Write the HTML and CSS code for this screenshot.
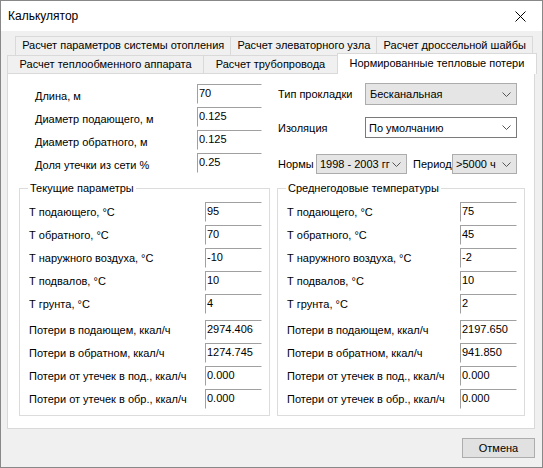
FILE: index.html
```html
<!DOCTYPE html>
<html lang="ru">
<head>
  <meta charset="UTF-8" />
  <title>Калькулятор</title>
  <link rel="stylesheet" href="styles.css">
</head>
<body>

  <div class="window">
    <div class="titlebar">
      <span class="title">Калькулятор</span>
      <svg class="close" width="11" height="11" viewBox="0 0 11 11">
        <path d="M0.5 0.5 L10.5 10.5 M10.5 0.5 L0.5 10.5" stroke="#000" stroke-width="1" fill="none"/>
      </svg>
    </div>

    <div class="client">
      <!-- Tabs -->
      <div class="tabs">
        <div class="tab-row back">
          <div class="tab">Расчет параметров системы отопления</div>
          <div class="tab">Расчет элеваторного узла</div>
          <div class="tab">Расчет дроссельной шайбы</div>
        </div>
        <div class="tab-row front">
          <div class="tab">Расчет теплообменного аппарата</div>
          <div class="tab">Расчет трубопровода</div>
          <div class="tab selected">Нормированные тепловые потери</div>
        </div>
      </div>

      <div class="panel">
        <div class="top">
          <div class="params">
            <label>Длина, м</label>
            <input class="field" type="text" value="70"/>
            <label>Диаметр подающего, м</label>
            <input class="field" type="text" value="0.125"/>
            <label>Диаметр обратного, м</label>
            <input class="field" type="text" value="0.125"/>
            <label>Доля утечки из сети %</label>
            <input class="field" type="text" value="0.25"/>
          </div>

          <div class="options">
            <div class="opt-row first">
              <span class="opt-label">Тип прокладки</span>
              <div class="combo flat wide">
                <span>Бесканальная</span>
                <svg class="chev" width="9" height="5" viewBox="0 0 9 5"><path d="M0.5 0.5 L4.5 4.5 L8.5 0.5" stroke="#555" fill="none"/></svg>
              </div>
            </div>
            <div class="opt-row second">
              <span class="opt-label">Изоляция</span>
              <div class="combo edit wide">
                <span>По умолчанию</span>
                <svg class="chev" width="9" height="5" viewBox="0 0 9 5"><path d="M0.5 0.5 L4.5 4.5 L8.5 0.5" stroke="#555" fill="none"/></svg>
              </div>
            </div>
            <div class="opt-row third">
              <span class="opt-label short">Нормы</span>
              <div class="combo flat norms">
                <span>1998 - 2003 гг</span>
                <svg class="chev" width="9" height="5" viewBox="0 0 9 5"><path d="M0.5 0.5 L4.5 4.5 L8.5 0.5" stroke="#555" fill="none"/></svg>
              </div>
              <span class="opt-label period">Период</span>
              <div class="combo flat hours">
                <span>&gt;5000 ч</span>
                <svg class="chev" width="9" height="5" viewBox="0 0 9 5"><path d="M0.5 0.5 L4.5 4.5 L8.5 0.5" stroke="#555" fill="none"/></svg>
              </div>
            </div>
          </div>
        </div>

        <div class="groups">
          <fieldset class="group left">
            <legend>Текущие параметры</legend>
            <div class="rows">
              <label>Т подающего, °C</label><input class="field" type="text" value="95"/>
              <label>Т обратного, °C</label><input class="field" type="text" value="70"/>
              <label>Т наружного воздуха, °C</label><input class="field" type="text" value="-10"/>
              <label>Т подвалов, °C</label><input class="field" type="text" value="10"/>
              <label>Т грунта, °C</label><input class="field" type="text" value="4"/>
            </div>
            <div class="rows losses">
              <label>Потери в подающем, ккал/ч</label><input class="field" type="text" value="2974.406"/>
              <label>Потери в обратном, ккал/ч</label><input class="field" type="text" value="1274.745"/>
              <label>Потери от утечек в под., ккал/ч</label><input class="field" type="text" value="0.000"/>
              <label>Потери от утечек в обр., ккал/ч</label><input class="field" type="text" value="0.000"/>
            </div>
          </fieldset>

          <fieldset class="group right">
            <legend>Среднегодовые температуры</legend>
            <div class="rows">
              <label>Т подающего, °C</label><input class="field" type="text" value="75"/>
              <label>Т обратного, °C</label><input class="field" type="text" value="45"/>
              <label>Т наружного воздуха, °C</label><input class="field" type="text" value="-2"/>
              <label>Т подвалов, °C</label><input class="field" type="text" value="10"/>
              <label>Т грунта, °C</label><input class="field" type="text" value="2"/>
            </div>
            <div class="rows losses">
              <label>Потери в подающем, ккал/ч</label><input class="field" type="text" value="2197.650"/>
              <label>Потери в обратном, ккал/ч</label><input class="field" type="text" value="941.850"/>
              <label>Потери от утечек в под., ккал/ч</label><input class="field" type="text" value="0.000"/>
              <label>Потери от утечек в обр., ккал/ч</label><input class="field" type="text" value="0.000"/>
            </div>
          </fieldset>
        </div>
      </div>

      <div class="footer">
        <button type="button" class="btn">Отмена</button>
      </div>
    </div>
  </div>

</body>
</html>
```

FILE: styles.css
```css
* {
  margin: 0;
  padding: 0;
  box-sizing: border-box;
}

body {
  background: #fff;
  color: #000;
  font-family: "Liberation Sans", Arial, sans-serif;
  font-size: 11px;
}

.window {
  width: 543px;
  height: 468px;
  border: 1px solid #888;
  background: #f0f0f0;
  display: flex;
  flex-direction: column;
}

.titlebar {
  height: 30px;
  background: #fff;
  display: flex;
  align-items: center;
  justify-content: space-between;
  padding: 0 16px 0 7px;
  font-size: 12px;
}

.client {
  flex: 1;
  display: flex;
  flex-direction: column;
  padding: 5px 0 0 6px;
}

/* tabs */
.tab-row {
  display: flex;
  height: 19px;
}

.tab-row.back {
  margin-left: 8px;
  width: 518px;
}

.tab-row.front {
  height: 18px;
  width: 528px;
}

.tab {
  flex: 1 1 auto;
  border: 1px solid #d9d9d9;
  border-bottom: none;
  margin-left: -1px;
  background: #f0f0f0;
  font-size: 11px;
  line-height: 17px;
  text-align: center;
  white-space: nowrap;
}

.tab:first-child {
  margin-left: 0;
}

.tab.selected {
  align-self: flex-start;
  height: 21px;
  margin-top: -2px;
  margin-right: -2px;
  line-height: 19px;
  background: #fff;
  position: relative;
  z-index: 1;
}

/* page */
.panel {
  width: 528px;
  height: 356px;
  border: 1px solid #d9d9d9;
  background: #fff;
}

.top {
  display: flex;
  padding: 10px 0 0 27px;
}

.params {
  display: grid;
  grid-template-columns: 162px 65px;
  grid-auto-rows: 20px;
  row-gap: 3px;
}

.params label {
  padding-top: 5px;
  line-height: 14px;
}

.field {
  width: 100%;
  height: 20px;
  border: 1px solid;
  border-color: #a0a0a0 #fff #fff #a0a0a0;
  background: #fff;
  color: #000;
  font: inherit;
  padding: 0 1px 3px;
  outline: none;
}

.options {
  margin-left: 16px;
  margin-top: -1px;
  width: 239px;
  display: flex;
  flex-direction: column;
}

.opt-row {
  display: flex;
  align-items: center;
}

.opt-row.second {
  margin-top: 12px;
}

.opt-row.third {
  margin-top: 16px;
}

.opt-label {
  width: 87px;
}

.opt-label.short {
  width: 38px;
}

.opt-label.period {
  width: 39px;
  margin-left: 6px;
}

.combo {
  display: flex;
  align-items: center;
  justify-content: space-between;
  padding: 0 5px 0 4px;
  border: 1px solid #acacac;
  background: #e5e5e5;
  white-space: nowrap;
}

.combo.edit {
  border-color: #7a7a7a;
  background: #fff;
  padding-left: 3px;
}

.combo.wide {
  width: 152px;
  height: 22px;
}

.combo.edit.wide {
  height: 21px;
}

.combo.norms {
  width: 91px;
  height: 20px;
  padding-left: 3px;
}

.combo.hours {
  width: 65px;
  height: 20px;
  padding-left: 3px;
}

.chev {
  flex: none;
}

/* group boxes */
.groups {
  display: flex;
  gap: 7px;
  margin-top: 7px;
  padding-left: 11px;
}

.group {
  border: 1px solid #dcdcdc;
  height: 235px;
}

.group.left {
  width: 251px;
}

.group.right {
  width: 248px;
}

.group legend {
  margin-left: 8px;
  padding: 0 2px;
  line-height: 14px;
}

.rows {
  display: grid;
  grid-template-columns: 1fr 57px;
  grid-auto-rows: 20px;
  row-gap: 3px;
  align-items: center;
  padding: 7px 7px 0 9px;
}

.rows.losses {
  padding-top: 6px;
}

.rows label {
  white-space: nowrap;
}

/* bottom */
.footer {
  width: 528px;
  display: flex;
  justify-content: flex-end;
  margin-top: 9px;
}

.btn {
  width: 73px;
  height: 20px;
  border: 1px solid #adadad;
  background: #e1e1e1;
  font: inherit;
  color: #000;
}
```
